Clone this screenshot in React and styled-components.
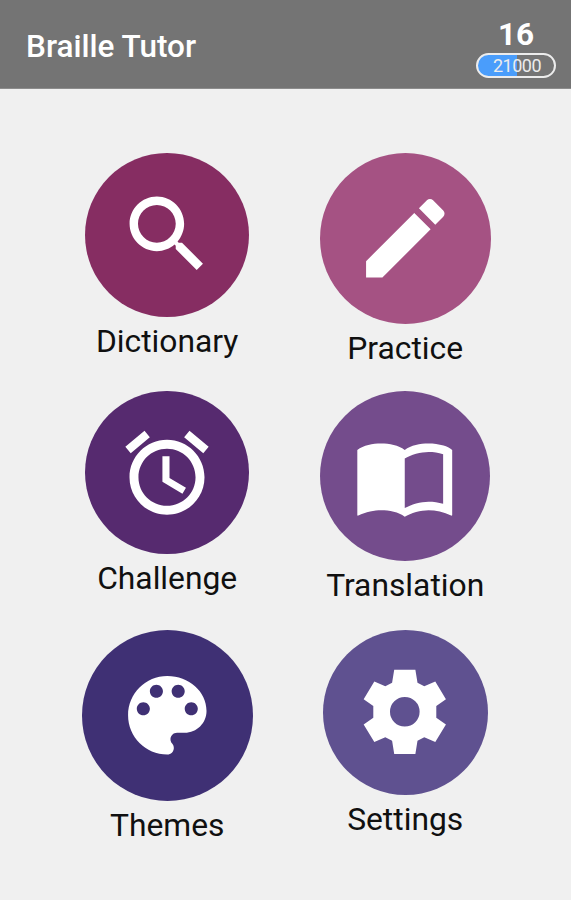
import React from 'react';
import styled, { createGlobalStyle } from 'styled-components';

const GlobalStyle = createGlobalStyle`
  * {
    box-sizing: border-box;
  }

  body {
    margin: 0;
    background: #f0f0f0;
    font-family: Roboto, 'Liberation Sans', sans-serif;
  }
`;

const Screen = styled.div`
  min-height: 900px;
  background: #f0f0f0;
`;

const Header = styled.header`
  display: flex;
  justify-content: space-between;
  height: 89px;
  padding: 0 15px 0 26px;
  background: #747474;
  border-bottom: 1px solid #8c8c8c;
  color: #fff;
`;

const Title = styled.h1`
  margin: 0;
  font-size: 31.5px;
  font-weight: 500;
  line-height: 94px;
`;

const Score = styled.div`
  display: flex;
  flex-direction: column;
  align-items: center;
  width: 80px;
  padding-top: 17px;
`;

const Level = styled.div`
  font-size: 31.5px;
  font-weight: 700;
  line-height: 36px;
`;

const Progress = styled.div`
  width: 80px;
  height: 25px;
  padding-left: 2px;
  border: 2px solid #ececec;
  border-radius: 13px;
  background: linear-gradient(to right, #4a9dfb ${({ $value }) => $value}%, transparent 0);
  font-size: 18px;
  line-height: 22px;
  letter-spacing: -0.5px;
  text-align: center;
  color: #ececec;
`;

const Menu = styled.main`
  display: grid;
  grid-template-columns: 238px 238px;
  grid-auto-rows: 238.5px;
  padding: 63.5px 0 0 48.2px;
`;

const MenuItem = styled.div`
  display: flex;
  flex-direction: column;
  align-items: center;
`;

const Circle = styled.div`
  display: flex;
  align-items: center;
  justify-content: center;
  width: ${({ $size }) => $size}px;
  height: ${({ $size }) => $size}px;
  border-radius: 50%;
  background: ${({ $color }) => $color};
`;

const Icon = styled.svg`
  width: ${({ $size }) => $size}px;
  height: ${({ $size }) => $size}px;
  fill: #fff;
`;

const Label = styled.div`
  margin-top: 5px;
  font-size: 31.8px;
  line-height: 38px;
  color: #101010;
`;

const items = [
  {
    label: 'Dictionary',
    color: '#862d62',
    size: 164.4,
    icon: 100.7,
    path:
      'M15.5 14h-.79l-.28-.27C15.41 12.59 16 11.11 16 9.5 16 5.91 13.09 3 9.5 3S3 5.91 3 9.5 5.91 16 9.5 16c1.61 0 3.09-.59 4.23-1.57l.27.28v.79l5 4.99L20.49 19l-4.99-5zm-6 0C7.01 14 5 11.99 5 9.5S7.01 5 9.5 5 14 7.01 14 9.5 11.99 14 9.5 14z',
  },
  {
    label: 'Practice',
    color: '#a55283',
    size: 171,
    icon: 104.6,
    path:
      'M3 17.25V21h3.75L17.81 9.94l-3.75-3.75L3 17.25zM20.71 7.04c.39-.39.39-1.02 0-1.41l-2.34-2.34c-.39-.39-1.02-.39-1.41 0l-1.83 1.83 3.75 3.75 1.83-1.83z',
  },
  {
    label: 'Challenge',
    color: '#562a6f',
    size: 163.4,
    icon: 100,
    path:
      'M22 5.72l-4.6-3.86-1.29 1.53 4.6 3.86L22 5.72zM7.88 3.39L6.6 1.86 2 5.71l1.29 1.53 4.59-3.85zM12.6 8H10.9v6.1l4.8 2.85.85-1.4-3.95-2.35V8zM12 4c-4.97 0-9 4.03-9 9s4.02 9 9 9c4.97 0 9-4.03 9-9s-4.03-9-9-9zm0 15.85c-3.8 0-6.85-3.05-6.85-6.85S8.2 6.15 12 6.15 18.85 9.2 18.85 13 15.8 19.85 12 19.85z',
  },
  {
    label: 'Translation',
    color: '#744c8c',
    size: 170,
    icon: 103.5,
    path:
      'M21 5c-1.11-.35-2.33-.5-3.5-.5-1.95 0-4.05.4-5.5 1.5-1.45-1.1-3.55-1.5-5.5-1.5S2.45 4.9 1 6v15.1c0 .15.1.2.25.12C2.9 20.4 5.05 20 6.5 20c1.95 0 4.05.4 5.5 1.5 1.35-.85 3.8-1.5 5.5-1.5 1.65 0 3.6.4 5.25 1.22.15.08.25.03.25-.12V6c-.6-.45-1.25-.75-2-1zm-.1 13.5c-1.1-.35-2.2-.5-3.4-.5-1.7 0-4.15.65-5.5 1.5V8c1.35-.85 3.8-1.5 5.5-1.5 1.2 0 2.3.15 3.4.5v11.5z',
  },
  {
    label: 'Themes',
    color: '#3f3074',
    size: 171,
    icon: 104.6,
    path:
      'M12 3c-4.97 0-9 4.03-9 9s4.03 9 9 9c.83 0 1.5-.67 1.5-1.5 0-.39-.15-.74-.39-1.01-.23-.26-.38-.61-.38-.99 0-.83.67-1.5 1.5-1.5H16c2.76 0 5-2.24 5-5 0-4.42-4.03-8-9-8zm-5.5 9c-.83 0-1.5-.67-1.5-1.5S5.67 9 6.5 9 8 9.67 8 10.5 7.33 12 6.5 12zm3-4C8.67 8 8 7.33 8 6.5S8.67 5 9.5 5s1.5.67 1.5 1.5S10.33 8 9.5 8zm5 0c-.83 0-1.5-.67-1.5-1.5S13.67 5 14.5 5s1.5.67 1.5 1.5S15.33 8 14.5 8zm3 4c-.83 0-1.5-.67-1.5-1.5S16.67 9 17.5 9s1.5.67 1.5 1.5-.67 1.5-1.5 1.5z',
  },
  {
    label: 'Settings',
    color: '#5f5190',
    size: 165,
    icon: 101.6,
    path:
      'M9.5 2.05h5l.5 3.1 1.6.83 2.6-1.14 2.52 4.18-2.28 1.6v2.76l2.28 1.6-2.52 4.18-2.6-1.14-1.6.83-.5 3.1h-5l-.5-3.1-1.6-.83-2.6 1.14-2.52-4.18 2.28-1.6v-2.76l-2.28-1.6L4.8 4.84l2.6 1.14L9 5.15l.5-3.1zM12 8.5a3.5 3.5 0 1 0 0 7 3.5 3.5 0 0 0 0-7z',
  },
];

const App = () => (
  <>
    <GlobalStyle />
    <Screen>
      <Header>
        <Title>Braille Tutor</Title>
        <Score>
          <Level>16</Level>
          <Progress $value={51}>21000</Progress>
        </Score>
      </Header>
      <Menu>
        {items.map(({ label, color, size, icon, path }) => (
          <MenuItem key={label}>
            <Circle $size={size} $color={color}>
              <Icon $size={icon} viewBox="0 0 24 24">
                <path d={path} />
              </Icon>
            </Circle>
            <Label>{label}</Label>
          </MenuItem>
        ))}
      </Menu>
    </Screen>
  </>
);

export default App;
